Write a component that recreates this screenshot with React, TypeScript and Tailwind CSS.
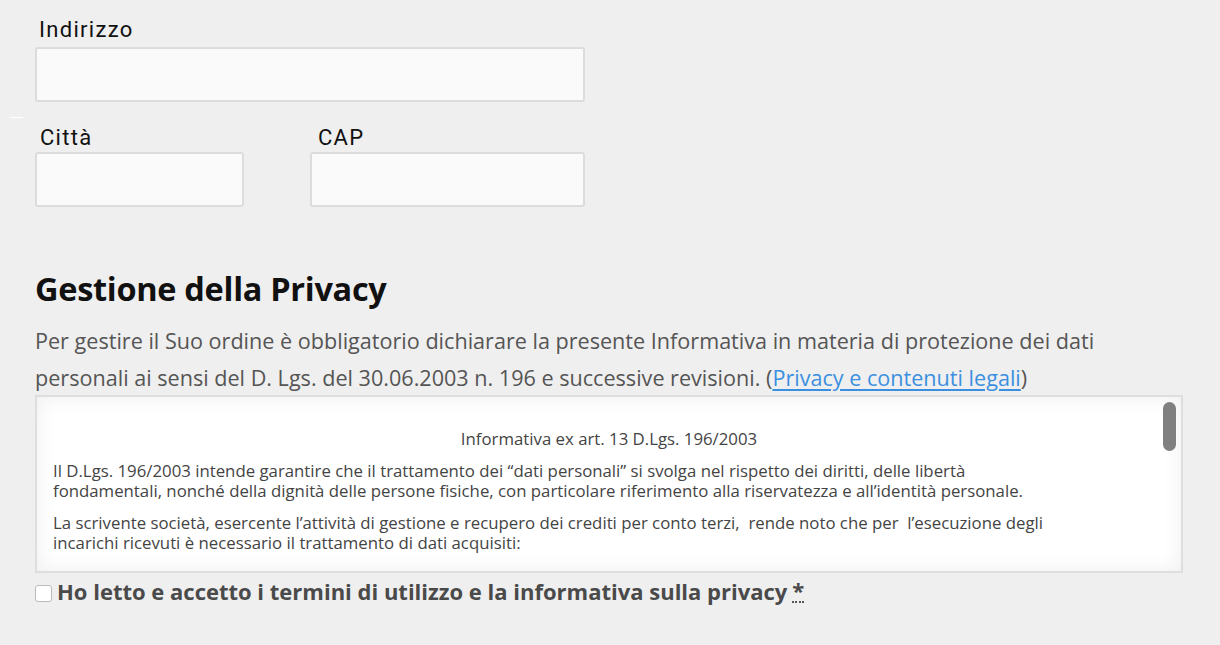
import type { ReactNode } from 'react';

// Simple labelled input used in the address block
function Field({
  label,
  className,
  labelClassName,
  inputClassName,
}: {
  label: string;
  className: string;
  labelClassName?: string;
  inputClassName?: string;
}) {
  return (
    <div className={className}>
      <label
        className={`block text-[22px] leading-[26px] tracking-[1.3px] text-[#111] font-['Roboto',sans-serif] ${labelClassName ?? ''}`}
      >
        {label}
      </label>
      <input
        type="text"
        className={`block w-full rounded-[3px] border-2 border-[#dcdcdc] bg-[#fafafa] outline-none ${inputClassName ?? ''}`}
      />
    </div>
  );
}

function Para({ children }: { children: ReactNode }) {
  return <p className="mt-[12px] text-[16.8px] leading-[20px]">{children}</p>;
}

export default function App() {
  return (
    <div className="min-h-[645px] w-[1220px] bg-[#efefef] pl-[35px] pt-[17px] font-['Open_Sans',sans-serif]">
      {/* Address */}
      <Field
        label="Indirizzo"
        className="w-[550px]"
        labelClassName="pl-[4px]"
        inputClassName="mt-[4px] h-[55px]"
      />

      <div className="relative mt-[23px] flex w-[550px] gap-[66px]">
        <span className="absolute -left-[25px] -top-[8px] h-px w-[13px] bg-white" />
        <Field
          label="Città"
          className="w-[209px]"
          labelClassName="pl-[5px]"
          inputClassName="mt-[1px] h-[55px]"
        />
        <Field
          label="CAP"
          className="w-[275px]"
          labelClassName="pl-[8px]"
          inputClassName="mt-[1px] h-[55px]"
        />
      </div>

      {/* Privacy */}
      <h2 className="mt-[62px] text-[32.5px] font-bold leading-[40px] tracking-[-0.3px] text-[#111]">
        Gestione della Privacy
      </h2>
      <p className="mt-[13px] w-[1140px] text-[21.6px] leading-[37px] text-[#555]">
        Per gestire il Suo ordine è obbligatorio dichiarare la presente Informativa in materia di
        protezione dei dati
        <br />
        personali ai sensi del D. Lgs. del 30.06.2003 n. 196 e successive revisioni. (
        <a href="#" className="text-[#3b8fe0] underline underline-offset-[3px]">
          Privacy e contenuti legali
        </a>
        )
      </p>

      <div className="relative -mt-[1px] h-[178px] w-[1148px] overflow-hidden border-2 border-[#dedede] bg-white shadow-[inset_0_0_20px_rgba(0,0,0,0.07)]">
        <div className="px-[16px] pt-[32px] text-[#444]">
          <p className="text-center text-[16.8px] leading-[20px]">
            Informativa ex art. 13 D.Lgs. 196/2003
          </p>
          <div className="mt-[10px]">
            <Para>
              Il D.Lgs. 196/2003 intende garantire che il trattamento dei “dati personali” si svolga nel
              rispetto dei diritti, delle libertà
              <br />
              fondamentali, nonché della dignità delle persone fisiche, con particolare riferimento alla
              riservatezza e all’identità personale.
            </Para>
            <Para>
              La scrivente società, esercente l’attività di gestione e recupero dei crediti per conto
              terzi,&nbsp; rende noto che per&nbsp; l’esecuzione degli
              <br />
              incarichi ricevuti è necessario il trattamento di dati acquisiti:
            </Para>
          </div>
        </div>
        <div className="absolute right-[5px] top-[5px] h-[49px] w-[13px] rounded-full bg-[#808080]" />
      </div>

      <label className="mt-[3px] flex items-center gap-[5px] text-[22px] font-bold leading-[30px] text-[#4a4a4a]">
        <span className="mt-[5px] inline-block h-[17px] w-[17px] rounded-[3px] border border-[#bbb] bg-white" />
        Ho letto e accetto i termini di utilizzo e la informativa sulla privacy
        <abbr title="obbligatorio" className="no-underline border-b-2 border-dotted border-[#555] leading-[22px]">
          *
        </abbr>
      </label>
    </div>
  );
}
